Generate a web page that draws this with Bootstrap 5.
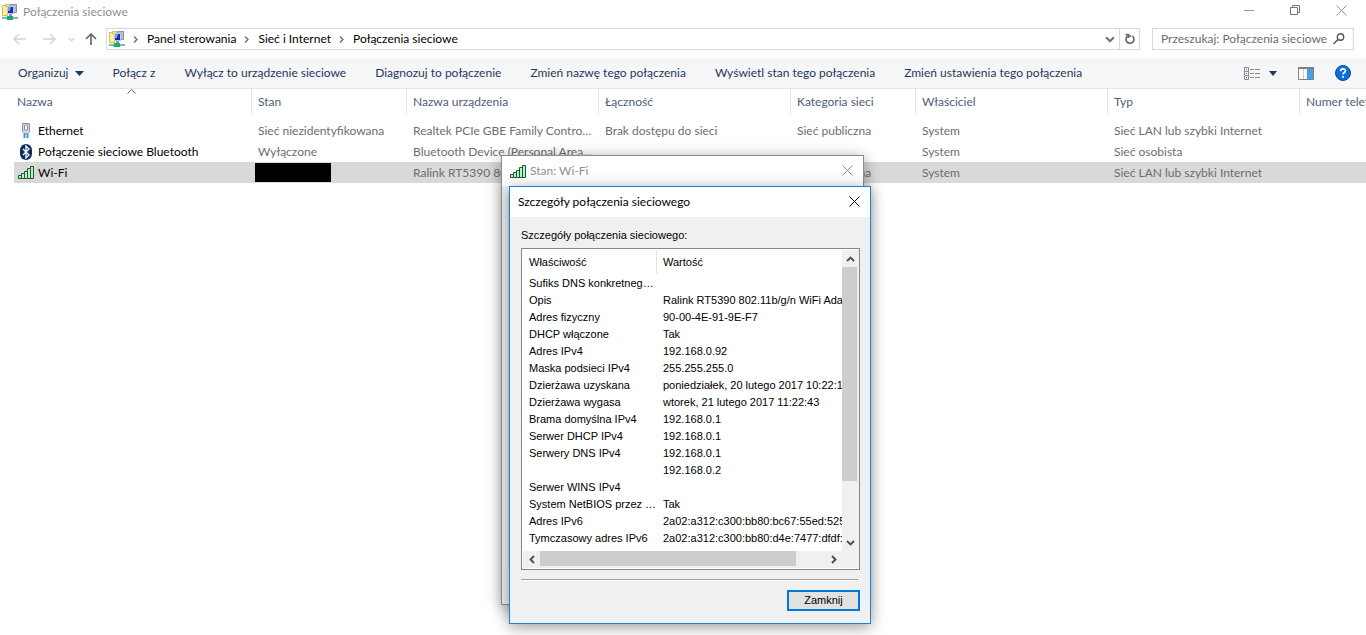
<!DOCTYPE html>
<html lang="pl">
<head>
<meta charset="utf-8">
<meta name="viewport" content="width=device-width, initial-scale=1">
<title>Połączenia sieciowe</title>
<link href="https://cdn.jsdelivr.net/npm/bootstrap@5.3.0/dist/css/bootstrap.min.css" rel="stylesheet">
<style>
body{font:12px/16px Lato,"Open Sans",sans-serif;color:#000;background:#fff;overflow:hidden}
button,input{font:inherit}
svg{flex:none}
.bare{border:0;background:none;padding:0;color:inherit}
.titlebar{height:24px;padding:0 2px 4px 2px;color:#8f8f8f}
.titlebar span{padding-top:4px;margin-left:5px}
.caption-btn{width:46px;height:20px}
.addr-row{height:34px;padding:0 12px 4px 12px}
.addr-row .bare{line-height:0}
.addr-box{height:22px;border:1px solid #d9d9d9;margin-left:8px;margin-right:12px;padding-left:2px}
.addr-box a{color:#000}
.addr-box li{gap:9px;padding-left:8px}
.nav-menu{margin:0 9px 0 12px;color:#d4d4d4}
.refresh{width:20px;border-left:1px solid #d9d9d9}
.search-box{width:202px;height:22px;border:1px solid #d9d9d9}
.search-box input{border:0;outline:0;padding:0;min-width:0;background:none}
.search-box input::placeholder{color:#6d6d6d;opacity:1}
.toolbar{height:31px;background:#f5f6f7;border-bottom:1px solid #e5e6e8;padding:0 15px 0 18px;color:#1e395b;gap:29px}
.organize{gap:6px}
.tool-icons{gap:21px}
.conn-list{padding-left:14px}
.conn{table-layout:fixed;width:100%;border-collapse:separate;border-spacing:0}
.conn th{height:31px;padding:0;vertical-align:top;font-weight:400;color:#4c607a}
.conn th div{height:25px;padding:5px 6px 4px;border-right:1px solid #e5e5e5;overflow:hidden}
.conn td{height:21px;padding:0 6px;color:#6d6d6d;overflow:hidden;text-overflow:ellipsis}
.conn th:first-child div{padding-left:3px}
.conn td:first-child{padding-left:4px;color:#000}
.conn .sel td{background:#d9d9d9}
.c-name{width:238px}.c-state{width:155px}.c-wide{width:192px}.c-cat{width:125px}
.redacted{width:76px;height:19px;margin-left:-3px;background:#000}
.sort-mark{left:127px;top:89px}
.win{background:#f0f0f0;box-shadow:0 3px 14px rgba(0,0,0,.4)}
.win-status{left:501px;top:155px;width:363px;height:450px;border:1px solid #8c8c8c;color:#8f8f8f}
.win-status .tab-page{margin:7px 6px 36px;background:#fff;border:1px solid #dcdcdc}
.win-details{left:509px;top:186px;width:362px;height:438px;border:1px solid #1883d7}
.win-head{height:30px;background:#fff;padding:0 10px 0 8px}
.win-head button{margin-bottom:2px}
.dlg{font:11px/17px "Liberation Sans",sans-serif;padding:10px 10px 12px 11px}
.listbox{height:322px;border:1px solid #828790;background:#fff;padding:1px 0 1px 1px;margin-top:4px;display:grid;grid-template:minmax(0,1fr) 17px/minmax(0,1fr) 17px}
.props{table-layout:fixed;width:420px}
.props th{font-weight:400;height:25px;padding:0;vertical-align:top}
.props th div{height:24px;padding:4px 6px 3px}
.props th:first-child div{border-right:1px solid #e5e5e5}
.props td{height:17px;padding:0 0 0 6px;overflow:hidden;text-overflow:ellipsis}
.p-key{width:134px}
.track{background:#f0f0f0;color:#505050}
.step{width:17px;height:17px;line-height:0}
.v-thumb{width:15px;height:214px;background:#cdcdcd}
.h-thumb{width:256px;height:15px;background:#cdcdcd}
.rule{height:2px;margin:9px 2px 9px 0;background:#a0a0a0;border-bottom:1px solid #fff}
.close-btn{width:73px;height:21px;border:2px solid #0078d7;background:#e1e1e1;padding:0;line-height:17px}
</style>
<script src="https://cdn.jsdelivr.net/npm/bootstrap@5.3.0/dist/js/bootstrap.bundle.min.js"></script>
</head>
<body>
<svg class="d-none">
  <symbol id="net" viewBox="0 0 16 16">
    <path d="M.5 1.500h5v10h-5z" fill="#f9ec9a" stroke="#d3bd62"/>
    <path d="M3.500.5h4v2h-4z" fill="#f7e58c" stroke="#d3bd62"/>
    <path d="M8.500.5h6v8h-6z" fill="#b4bfce" stroke="#8593ab"/>
    <path d="M5.500 2.500h6v7h-6z" fill="#1428c4" stroke="#c2cad8"/>
    <path d="M6 3h3l-1 4H6z" fill="#6c9cf8"/>
    <path d="M7 10h3v2H7z" fill="#8e99aa"/>
    <path d="M0 13h16v2H0z" fill="#8fb5a6"/><path d="M5 12h6v4H5z" fill="#12b26b"/>
  </symbol>
  <symbol id="wifi" viewBox="0 0 16 13">
    <path d="M.5 9.500h3v3h-3zM3.500 7.500h3v5h-3zM6.500 5.500h3v7h-3zM9.500 2.500h3v10h-3zM12.500.5h3v12h-3z" fill="#b5f5c5" stroke="#1d5a33"/>
  </symbol>
  <symbol id="chev" viewBox="0 0 5 7"><path d="M1 .5l3 3-3 3" fill="none" stroke="#6a6a6a" stroke-width="1.300"/></symbol>
  <symbol id="cross" viewBox="0 0 11 11"><path d="M.5.5l10 10M10.500.5l-10 10" fill="none" stroke="currentColor"/></symbol>
  <symbol id="arr" viewBox="0 0 9 6"><path d="M1 1l3.500 3.500L8 1" fill="none" stroke="currentColor" stroke-width="1.900"/></symbol>
</svg>

<header class="titlebar d-flex align-items-center">
  <svg class="mt-1" width="16" height="16"><use href="#net"/></svg>
  <span class="me-auto">Połączenia sieciowe</span>
  <button class="bare caption-btn" aria-label="Minimalizuj"><svg width="11" height="11"><path d="M0 5.500h10" stroke="#999"/></svg></button>
  <button class="bare caption-btn" aria-label="Przywróć"><svg width="11" height="11" fill="none" stroke="#777"><path d="M.5 2.500h7v7h-7zM2.500 2.500v-2h7v7h-2"/></svg></button>
  <button class="bare caption-btn" aria-label="Zamknij okno"><svg width="11" height="11"><use href="#cross"/></svg></button>
</header>

<nav class="addr-row d-flex align-items-center" aria-label="Adres">
  <button class="bare" aria-label="Wstecz"><svg width="14" height="16" fill="none" stroke="#d4d4d4" stroke-width="1.500"><path d="M14 8H2M7 3L2 8l5 5"/></svg></button>
  <button class="bare ms-3" aria-label="Dalej"><svg width="14" height="16" fill="none" stroke="#d4d4d4" stroke-width="1.500"><path d="M1 8h12M8 3l5 5-5 5"/></svg></button>
  <button class="bare nav-menu" aria-label="Historia"><svg width="7" height="5"><use href="#arr"/></svg></button>
  <button class="bare" aria-label="W górę"><svg width="14" height="14" fill="none" stroke="#6a6a6a" stroke-width="1.700"><path d="M7 13V2M2 7l5-5 5 5"/></svg></button>
  <div class="addr-box flex-grow-1 d-flex align-items-center">
    <svg width="16" height="16"><use href="#net"/></svg>
    <ol class="list-unstyled d-flex align-items-center mb-0 me-auto">
      <li class="d-flex align-items-center"><svg width="5" height="7"><use href="#chev"/></svg><a href="#" class="text-decoration-none">Panel sterowania</a></li>
      <li class="d-flex align-items-center"><svg width="5" height="7"><use href="#chev"/></svg><a href="#" class="text-decoration-none">Sieć i Internet</a></li>
      <li class="d-flex align-items-center"><svg width="5" height="7"><use href="#chev"/></svg><a href="#" class="text-decoration-none">Połączenia sieciowe</a></li>
    </ol>
    <button class="bare px-1 text-secondary" aria-label="Poprzednie lokalizacje"><svg width="10" height="7"><use href="#arr"/></svg></button>
    <button class="bare refresh h-100" aria-label="Odśwież"><svg width="12" height="12" fill="none" stroke="#666" stroke-width="1.600"><path d="M3.700 3A4 4 0 1 0 8.500 3.200M3.700 3L7.200 3M1.500 1.500h3v3.500"/></svg></button>
  </div>
  <div class="search-box d-flex align-items-center ps-2 pe-2">
    <input class="flex-grow-1" type="text" aria-label="Przeszukaj" placeholder="Przeszukaj: Połączenia sieciowe">
    <svg width="12" height="12" fill="none" stroke="#555" stroke-width="1.400"><circle cx="7.500" cy="4" r="3.200"/><path d="M5 6.500L.5 11"/></svg>
  </div>
</nav>

<div class="toolbar d-flex align-items-center text-nowrap" role="toolbar">
  <button class="bare organize d-flex align-items-center">Organizuj <svg width="9" height="5"><path d="M0 0h9L4.500 5z" fill="#1e395b"/></svg></button>
  <button class="bare">Połącz z</button>
  <button class="bare">Wyłącz to urządzenie sieciowe</button>
  <button class="bare">Diagnozuj to połączenie</button>
  <button class="bare">Zmień nazwę tego połączenia</button>
  <button class="bare">Wyświetl stan tego połączenia</button>
  <button class="bare">Zmień ustawienia tego połączenia</button>
  <div class="tool-icons d-flex align-items-center ms-auto">
    <button class="bare d-flex align-items-center gap-2" aria-label="Zmień widok">
      <svg width="17" height="13" fill="none" stroke="#8a8a8a"><path d="M.5.5h4v12h-4zM.5 4.500h4M.5 8.500h4"/><path d="M6 2.500h4M11 2.500h5M6 6.500h4M11 6.500h5M6 10.500h4M11 10.500h5"/><path d="M2 2.500h1" stroke="#36c"/><path d="M2 6.500h1" stroke="#36c"/><path d="M2 10.500h1" stroke="#d00"/></svg>
      <svg width="8" height="5"><path d="M0 0h8L4 5z" fill="#1e395b"/></svg>
    </button>
    <button class="bare d-flex" aria-label="Okienko podglądu"><svg width="16" height="13"><path d="M.5.5h15v12H.5z" fill="#fff" stroke="#808080"/><path d="M0 0h16v2H0z" fill="#808080"/><path d="M5.500 2v10" stroke="#ccc"/><path d="M9 2h6v10H9z" fill="#48a0ea"/></svg></button>
    <button class="bare d-flex" aria-label="Pomoc"><svg width="16" height="16"><circle cx="8" cy="8" r="7.500" fill="#0a6fd6" stroke="#064f9e"/><path d="M5.600 6.200C5.600 3 10.500 3.200 10.400 5.900 10.300 7.600 8 7.500 8 9.600M8 11v1.800" fill="none" stroke="#fff" stroke-width="1.700"/></svg></button>
  </div>
</div>

<svg class="sort-mark position-absolute" width="9" height="5"><path d="M.5 4.500l4-4 4 4" fill="none" stroke="#666"/></svg>
<main class="conn-list">
<table class="conn text-nowrap">
  <colgroup><col class="c-name"><col class="c-state"><col class="c-wide"><col class="c-wide"><col class="c-cat"><col class="c-wide"><col class="c-wide"><col></colgroup>
  <thead><tr><th scope="col"><div>Nazwa</div></th><th scope="col"><div>Stan</div></th><th scope="col"><div>Nazwa urządzenia</div></th><th scope="col"><div>Łączność</div></th><th scope="col"><div>Kategoria sieci</div></th><th scope="col"><div>Właściciel</div></th><th scope="col"><div>Typ</div></th><th scope="col"><div class="border-0 pe-0">Numer telefonu</div></th></tr></thead>
  <tbody>
    <tr>
      <td><div class="d-flex align-items-center gap-1"><svg width="16" height="16"><path d="M4.500.5h7v8l-1.500 2H6l-1.500-2z" fill="#d3dbe6" stroke="#8794a6"/><path d="M6.500 2h3v5h-3z" fill="#fff" stroke="#8794a6"/><path d="M6.500 11v4M9.500 11v4" stroke="#2a9fc9" stroke-width="2"/></svg>Ethernet</div></td>
      <td>Sieć niezidentyfikowana</td><td>Realtek PCIe GBE Family Controller</td><td>Brak dostępu do sieci</td><td>Sieć publiczna</td><td>System</td><td>Sieć LAN lub szybki Internet</td><td></td>
    </tr>
    <tr>
      <td><div class="d-flex align-items-center gap-1"><svg width="16" height="16"><rect x="2" width="12" height="16" rx="6" fill="#0d2f66"/><path d="M5 5l6 6-3 3V2l3 3-6 6" fill="none" stroke="#fff" stroke-width="1.300"/></svg>Połączenie sieciowe Bluetooth</div></td>
      <td>Wyłączone</td><td>Bluetooth Device (Personal Area Network)</td><td></td><td></td><td>System</td><td>Sieć osobista</td><td></td>
    </tr>
    <tr class="sel">
      <td><div class="d-flex align-items-center gap-1"><svg width="16" height="13"><use href="#wifi"/></svg>Wi-Fi</div></td>
      <td><div class="redacted"></div></td><td>Ralink RT5390 802.11b/g/n WiFi Adapter</td><td></td><td>Sieć publiczna</td><td>System</td><td>Sieć LAN lub szybki Internet</td><td></td>
    </tr>
  </tbody>
</table>
</main>

<section class="win win-status position-absolute d-flex flex-column" aria-label="Stan: Wi-Fi">
  <div class="win-head d-flex align-items-center gap-1">
    <svg width="16" height="13"><use href="#wifi"/></svg><span class="me-auto">Stan: Wi-Fi</span>
    <button class="bare d-flex" aria-label="Zamknij stan"><svg width="11" height="11"><use href="#cross"/></svg></button>
  </div>
  <div class="tab-page flex-grow-1"></div>
</section>

<section class="win win-details position-absolute" role="dialog" aria-labelledby="dt">
  <div class="win-head d-flex align-items-center">
    <span id="dt" class="me-auto">Szczegóły połączenia sieciowego</span>
    <button class="bare d-flex" aria-label="Zamknij szczegóły"><svg width="11" height="11"><use href="#cross"/></svg></button>
  </div>
  <div class="dlg">
    <div>Szczegóły połączenia sieciowego:</div>
    <div class="listbox">
      <div class="overflow-hidden">
        <table class="props text-nowrap">
          <colgroup><col class="p-key"><col></colgroup>
          <thead><tr><th scope="col"><div>Właściwość</div></th><th scope="col"><div>Wartość</div></th></tr></thead>
          <tbody>
            <tr><td>Sufiks DNS konkretnego połączenia</td><td></td></tr>
            <tr><td>Opis</td><td>Ralink RT5390 802.11b/g/n WiFi Adapter</td></tr>
            <tr><td>Adres fizyczny</td><td>90-00-4E-91-9E-F7</td></tr>
            <tr><td>DHCP włączone</td><td>Tak</td></tr>
            <tr><td>Adres IPv4</td><td>192.168.0.92</td></tr>
            <tr><td>Maska podsieci IPv4</td><td>255.255.255.0</td></tr>
            <tr><td>Dzierżawa uzyskana</td><td>poniedziałek, 20 lutego 2017 10:22:1</td></tr>
            <tr><td>Dzierżawa wygasa</td><td>wtorek, 21 lutego 2017 11:22:43</td></tr>
            <tr><td>Brama domyślna IPv4</td><td>192.168.0.1</td></tr>
            <tr><td>Serwer DHCP IPv4</td><td>192.168.0.1</td></tr>
            <tr><td>Serwery DNS IPv4</td><td>192.168.0.1</td></tr>
            <tr><td></td><td>192.168.0.2</td></tr>
            <tr><td>Serwer WINS IPv4</td><td></td></tr>
            <tr><td>System NetBIOS przez TCP/IP</td><td>Tak</td></tr>
            <tr><td>Adres IPv6</td><td>2a02:a312:c300:bb80:bc67:55ed:525</td></tr>
            <tr><td>Tymczasowy adres IPv6</td><td>2a02:a312:c300:bb80:d4e:7477:dfdf:a</td></tr>
            <tr><td>Adres IPv6 połączenia lokalnego</td><td>fe80::bc67:55ed:5257:e54f%10</td></tr>
          </tbody>
        </table>
      </div>
      <div class="track d-flex flex-column">
        <button class="bare step" aria-label="W górę listy"><svg width="9" height="6"><path d="M1 5l3.500-3.500L8 5" fill="none" stroke="#505050" stroke-width="1.900"/></svg></button>
        <div class="v-thumb"></div>
        <button class="bare step mt-auto" aria-label="W dół listy"><svg width="9" height="6"><use href="#arr"/></svg></button>
      </div>
      <div class="track d-flex">
        <button class="bare step" aria-label="W lewo"><svg width="6" height="9"><path d="M5 1L1.500 4.500 5 8" fill="none" stroke="#505050" stroke-width="1.900"/></svg></button>
        <div class="h-thumb"></div>
        <button class="bare step ms-auto" aria-label="W prawo"><svg width="6" height="9"><path d="M1 1l3.500 3.500L1 8" fill="none" stroke="#505050" stroke-width="1.900"/></svg></button>
      </div>
      <div class="track"></div>
    </div>
    <div class="rule"></div>
    <div class="d-flex justify-content-end"><button class="close-btn">Zamknij</button></div>
  </div>
</section>
</body>
</html>
